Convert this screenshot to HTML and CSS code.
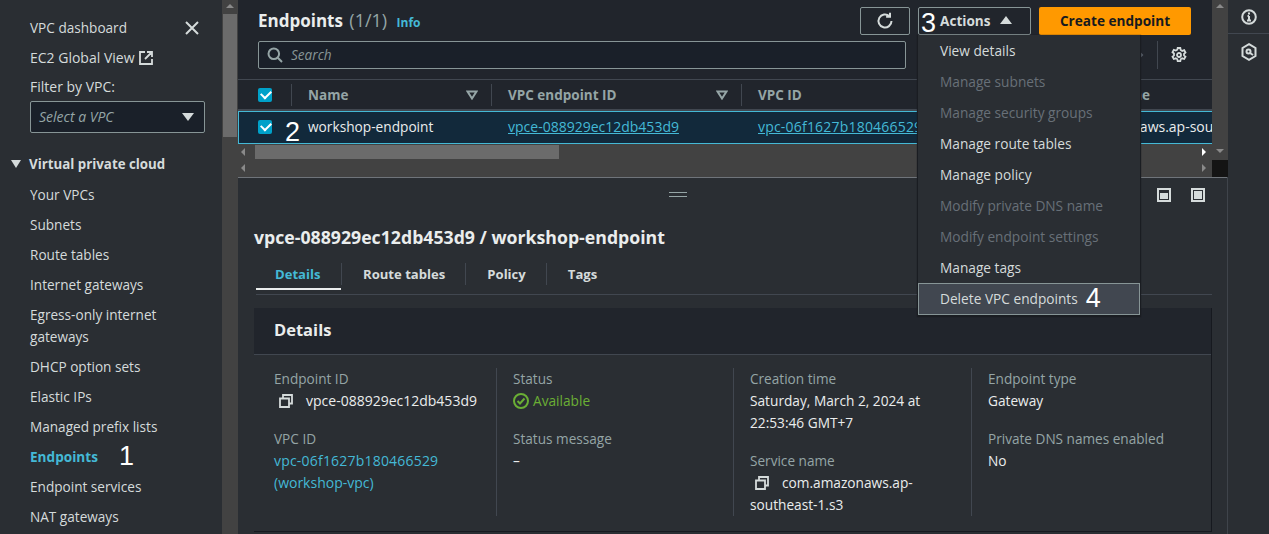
FILE: index.html
```html
<!DOCTYPE html>
<html lang="en">
<head>
    <meta charset="UTF-8">
    <meta name="viewport" content="width=device-width, initial-scale=1.0">
    <title>Endpoints | VPC Console</title>
    <link rel="stylesheet" href="styles.css">
</head>
<body>
    <aside class="nav">
        <div class="nav-top">
            <a class="nav-link">VPC dashboard</a>
            <svg class="nav-close" width="16" height="16" viewBox="0 0 16 16"><path d="M2 2l12 12M14 2L2 14"/></svg>
        </div>
        <a class="nav-link nav-global">EC2 Global View
            <svg class="ext" width="14" height="14" viewBox="0 0 14 14"><path d="M6 1H1v12h12V8M8 1h5v5M13 1L6 8"/></svg>
        </a>
        <div class="nav-filter">Filter by VPC:</div>
        <div class="nav-select">
            <span>Select a VPC</span>
            <i class="caret-down"></i>
        </div>
        <div class="nav-section"><i class="caret-down small"></i>Virtual private cloud</div>
        <ul class="nav-list">
            <li>Your VPCs</li>
            <li>Subnets</li>
            <li>Route tables</li>
            <li>Internet gateways</li>
            <li>Egress-only internet gateways</li>
            <li>DHCP option sets</li>
            <li>Elastic IPs</li>
            <li>Managed prefix lists</li>
            <li class="active"><b>Endpoints</b><span class="mark mark-nav">1</span></li>
            <li>Endpoint services</li>
            <li>NAT gateways</li>
        </ul>
    </aside>

    <div class="scrollbar nav-scroll">
        <i class="arrow-up"></i>
        <div class="scroll-thumb"></div>
    </div>

    <main class="content">
        <section class="top">
            <div class="table-panel">
                <div class="toolbar">
                    <h1>Endpoints <span class="count">(1/1)</span> <a class="info">Info</a></h1>
                    <div class="buttons">
                        <button class="btn btn-icon">
                            <svg width="18" height="18" viewBox="0 0 18 18"><path d="M15.500 9a6.500 6.500 0 1 1-2.100-4.800M14 0.800v3.900h-3.900"/></svg>
                        </button>
                        <button class="btn btn-actions"><span class="mark mark-btn">3</span>Actions<i class="caret-up"></i></button>
                        <button class="btn btn-primary">Create endpoint</button>
                    </div>
                </div>
                <div class="search-row">
                    <div class="search">
                        <svg width="16" height="16" viewBox="0 0 16 16"><circle cx="6.800" cy="6.800" r="5.300"/><path d="M10.800 10.800l4.200 4.200"/></svg>
                        <span>Search</span>
                    </div>
                    <div class="pager">
                        <svg class="pager-next" width="8" height="12" viewBox="0 0 8 12"><path d="M1 1l5 5-5 5"/></svg>
                        <div class="gear-wrap">
                            <svg class="gear" width="16" height="16" viewBox="0 0 16 16"><circle cx="8" cy="8" r="2"/><path d="M6.700 1h2.600l.4 2 1.500.9 2-.7 1.300 2.300-1.500 1.300v1.600l1.500 1.300-1.300 2.300-2-.7-1.500.9-.4 2H6.700l-.4-2-1.500-.9-2 .7-1.300-2.300 1.500-1.300V6.500L1.500 5.200l1.300-2.300 2 .7 1.500-.9z"/></svg>
                        </div>
                    </div>
                </div>
                <div class="table">
                    <div class="row head">
                        <div class="cell cell-check"><i class="check"></i></div>
                        <div class="cell cell-name">Name<svg class="filter" width="12" height="10" viewBox="0 0 12 10"><path d="M1.500 1.500h9L6 8.500z"/></svg></div>
                        <div class="cell cell-id">VPC endpoint ID<svg class="filter" width="12" height="10" viewBox="0 0 12 10"><path d="M1.500 1.500h9L6 8.500z"/></svg></div>
                        <div class="cell cell-vpc">VPC ID</div>
                        <div class="cell cell-service">Service name</div>
                    </div>
                    <div class="row selected">
                        <div class="cell cell-check"><i class="check"></i><span class="mark mark-row">2</span></div>
                        <div class="cell cell-name">workshop-endpoint</div>
                        <div class="cell cell-id"><a>vpce-088929ec12db453d9</a></div>
                        <div class="cell cell-vpc"><a class="vpc-id">vpc-06f1627b180466529</a></div>
                        <div class="cell cell-service">com.amazonaws.ap-southeast-1.s3</div>
                    </div>
                </div>
                <div class="hscroll">
                    <i class="arrow-left"></i>
                    <div class="hscroll-thumb"></div>
                    <i class="arrow-right bright"></i>
                </div>
                <div class="hscroll">
                    <i class="arrow-left"></i>
                    <i class="arrow-right"></i>
                </div>
            </div>
            <div class="scrollbar main-scroll">
                <i class="arrow-up"></i>
                <i class="arrow-down"></i>
                <div class="corner"></div>
            </div>
        </section>

        <section class="split">
            <div class="split-bar">
                <div class="handle"></div>
                <div class="split-icons">
                    <svg width="14" height="14" viewBox="0 0 14 14"><path d="M1 1h12v12H1z" class="frame"/><path d="M3 5h8v6H3z" class="fill"/></svg>
                    <svg width="14" height="14" viewBox="0 0 14 14"><path d="M1 1h12v12H1z" class="frame"/><path d="M3 3h8v8H3z" class="fill"/></svg>
                </div>
            </div>
            <h2>vpce-088929ec12db453d9 / workshop-endpoint</h2>
            <div class="tabs">
                <div class="tab current">Details</div>
                <div class="tab">Route tables</div>
                <div class="tab">Policy</div>
                <div class="tab">Tags</div>
            </div>
            <div class="card">
                <div class="card-head">Details</div>
                <div class="card-body">
                    <div class="col">
                        <dl>
                            <dt>Endpoint ID</dt>
                            <dd class="id-text"><svg class="copy" width="14" height="14" viewBox="0 0 14 14"><path d="M4 4V1h9v8.500h-3M1 4.500h9V13H1z"/></svg>vpce-088929ec12db453d9</dd>
                        </dl>
                        <dl>
                            <dt>VPC ID</dt>
                            <dd class="id-text"><a><span class="vpc-id">vpc-06f1627b180466529</span> (workshop-vpc)</a></dd>
                        </dl>
                    </div>
                    <div class="col">
                        <dl>
                            <dt>Status</dt>
                            <dd class="ok"><svg width="16" height="16" viewBox="0 0 16 16"><circle cx="8" cy="8" r="7"/><path d="M4.500 8l2.500 2.500 4.500-5"/></svg>Available</dd>
                        </dl>
                        <dl>
                            <dt>Status message</dt>
                            <dd>–</dd>
                        </dl>
                    </div>
                    <div class="col">
                        <dl>
                            <dt>Creation time</dt>
                            <dd>Saturday, March 2, 2024 at 22:53:46 GMT+7</dd>
                        </dl>
                        <dl>
                            <dt>Service name</dt>
                            <dd><svg class="copy" width="14" height="14" viewBox="0 0 14 14"><path d="M4 4V1h9v8.500h-3M1 4.500h9V13H1z"/></svg>com.amazonaws.ap-southeast-1.s3</dd>
                        </dl>
                    </div>
                    <div class="col">
                        <dl>
                            <dt>Endpoint type</dt>
                            <dd>Gateway</dd>
                        </dl>
                        <dl>
                            <dt>Private DNS names enabled</dt>
                            <dd>No</dd>
                        </dl>
                    </div>
                </div>
            </div>
        </section>

        <ul class="menu">
            <li>View details</li>
            <li class="off">Manage subnets</li>
            <li class="off">Manage security groups</li>
            <li>Manage route tables</li>
            <li>Manage policy</li>
            <li class="off">Modify private DNS name</li>
            <li class="off">Modify endpoint settings</li>
            <li>Manage tags</li>
            <li class="hover">Delete VPC endpoints<span class="mark mark-menu">4</span></li>
        </ul>
    </main>

    <aside class="rail">
        <div class="rail-item">
            <svg width="16" height="16" viewBox="0 0 16 16"><circle cx="8" cy="8" r="6.800"/><path d="M8 7v4.500M6 11.500h4M6.500 7H8"/><path d="M8 3.600v1.800"/></svg>
        </div>
        <div class="rail-item">
            <svg width="16" height="18" viewBox="0 0 16 18"><path d="M8 1.200l6.500 3.800v8L8 16.800 1.500 13V5z"/><circle cx="7.500" cy="8.500" r="2"/><path d="M9 10l3 2"/></svg>
        </div>
    </aside>
</body>
</html>
```

FILE: styles.css
```css
* {
    box-sizing: border-box;
}
html, body {
    height: 534px;
    overflow: hidden;
}
body {
    margin: 0;
    display: flex;
    font-family: "Open Sans", "Noto Sans", sans-serif;
    font-size: 14px;
    line-height: 22px;
    color: #d5dbdb;
    background-color: #2a2e33;
}
svg {
    fill: none;
    stroke: currentColor;
    stroke-width: 2;
}
a {
    color: #44b9d6;
}
ul {
    list-style: none;
    margin: 0;
    padding: 0;
}

/* annotation numbers typed on top of the screenshot */
.mark {
    font-family: "Liberation Sans", sans-serif;
    font-size: 27px;
    font-weight: 400;
    line-height: 0;
    color: #ffffff;
}
.mark-nav {
    margin-left: 21px;
    position: relative;
    top: 3px;
}
.mark-row {
    margin-left: 13px;
    position: relative;
    top: 5px;
}
.mark-btn {
    margin-right: 4px;
    position: relative;
    top: 3px;
}
.mark-menu {
    margin-left: 8px;
    position: relative;
    top: 3px;
}

/* left navigation */
.nav {
    width: 222px;
    flex: none;
    padding: 17px 0 0 30px;
    background-color: #2a2e33;
}
.nav-top {
    display: flex;
    justify-content: space-between;
    align-items: center;
    padding-right: 22px;
    font-size: 13.600px;
}
.nav-close {
    stroke: #d5dbdb;
}
.nav-link {
    color: #d5dbdb;
}
.nav-global {
    display: flex;
    align-items: center;
    gap: 5px;
    margin-top: 8px;
}
.ext {
    stroke-width: 1.800;
}
.nav-filter {
    margin-top: 7px;
}
.nav-select {
    width: 175px;
    height: 32px;
    margin-top: 3px;
    padding: 0 10px 0 8px;
    display: flex;
    justify-content: space-between;
    align-items: center;
    background-color: #1a2029;
    border: 1px solid #879596;
    border-radius: 2px;
    font-style: italic;
    color: #95a5a6;
}
.caret-down {
    width: 0;
    height: 0;
    border-left: 6px solid transparent;
    border-right: 6px solid transparent;
    border-top: 8px solid #d5dbdb;
}
.caret-down.small {
    border-left-width: 5px;
    border-right-width: 5px;
    border-top-width: 8px;
    margin-right: 8px;
}
.nav-section {
    display: flex;
    align-items: center;
    margin: 20px 0 0 -19px;
    font-size: 13.300px;
    font-weight: 700;
}
.nav-list {
    margin-top: 9px;
    width: 165px;
    font-size: 13.600px;
}
.nav-list li {
    margin-bottom: 8px;
}
.nav-list .active b {
    color: #44b9d6;
}

/* scrollbars */
.scrollbar {
    width: 16px;
    flex: none;
    background-color: #424242;
    position: relative;
}
.nav-scroll {
    height: 534px;
    padding: 14px 1px 0;
}
.scroll-thumb {
    height: 123px;
    background-color: #6b6b6b;
}
.arrow-up, .arrow-down {
    position: absolute;
    left: 4px;
    width: 0;
    height: 0;
    border-left: 4px solid transparent;
    border-right: 4px solid transparent;
}
.arrow-up {
    top: 4px;
    border-bottom: 4px solid #8a8a8a;
}
.arrow-down {
    top: 149px;
    border-top: 4px solid #8a8a8a;
}
.main-scroll {
    height: 177px;
}
.corner {
    position: absolute;
    left: 0;
    top: 160px;
    width: 16px;
    height: 17px;
    background-color: #141414;
}

/* main area */
.content {
    width: 990px;
    flex: none;
    position: relative;
    border-right: 1px solid #3f444b;
}
.top {
    display: flex;
    height: 178px;
    border-bottom: 1px solid #6f747a;
    background-color: #21252c;
}
.table-panel {
    width: 974px;
    flex: none;
    overflow: hidden;
}
.toolbar {
    display: flex;
    justify-content: space-between;
    height: 41px;
    padding: 7px 21px 0 20px;
}
h1 {
    margin: 0;
    font-size: 17px;
    line-height: 26px;
    font-weight: 700;
    color: #eaeded;
}
.count {
    margin-left: 2px;
    font-size: 18px;
    font-weight: 400;
    color: #95a5a6;
}
.info {
    margin-left: 5px;
    font-size: 12px;
    font-weight: 700;
    color: #44b9d6;
}
.buttons {
    display: flex;
    gap: 8px;
}
.btn {
    height: 28px;
    padding: 0 0 2px;
    font-family: inherit;
    font-size: 13.600px;
    font-weight: 700;
    border-radius: 2px;
    display: flex;
    align-items: center;
    justify-content: center;
}
.btn-icon {
    width: 50px;
    padding: 0;
    background: none;
    border: 1px solid #879596;
    color: #d5dbdb;
}
.btn-actions {
    width: 113px;
    justify-content: flex-start;
    padding-left: 2px;
    background: none;
    border: 1px solid #879596;
    color: #d5dbdb;
}
.caret-up {
    margin-left: 9px;
    width: 0;
    height: 0;
    border-left: 6px solid transparent;
    border-right: 6px solid transparent;
    border-bottom: 8px solid #d5dbdb;
}
.btn-primary {
    width: 152px;
    background-color: #ff9900;
    border: none;
    color: #16191f;
}
.search-row {
    display: flex;
    height: 39px;
    padding-left: 20px;
    border-bottom: 1px solid #414750;
}
.search {
    width: 648px;
    height: 28px;
    padding-left: 8px;
    display: flex;
    align-items: center;
    gap: 8px;
    background-color: #1a2029;
    border: 1px solid #879596;
    border-radius: 2px;
    font-size: 13.600px;
    font-style: italic;
    color: #879596;
}
.search svg {
    color: #95a5a6;
}
.pager {
    flex: 1;
    height: 28px;
    display: flex;
    align-items: center;
}
.pager-next {
    margin-left: 230px;
    color: #545b64;
}
.gear-wrap {
    height: 28px;
    margin-left: 13px;
    padding-left: 13px;
    display: flex;
    align-items: center;
    border-left: 1px solid #414750;
}
.gear {
    color: #d5dbdb;
    stroke-width: 1.800;
}
.table {
    width: 974px;
}
.row {
    display: flex;
    align-items: center;
    white-space: nowrap;
}
.head {
    height: 31px;
    padding-top: 1px;
    font-size: 13.500px;
    font-weight: 700;
    color: #95a5a6;
    border-bottom: 2px solid #414750;
}
.selected {
    height: 33px;
    padding-bottom: 1px;
    color: #eaeded;
    background-color: #12293b;
    border-top: 1px solid #44b9d6;
    border-bottom: 1px solid #44b9d6;
    box-shadow: inset 1px 0 0 #44b9d6;
}
.selected a {
    text-decoration: underline;
}
.cell {
    flex: none;
    display: flex;
    align-items: center;
    padding-left: 16px;
    height: 22px;
}
.cell-check {
    width: 53px;
    padding-left: 20px;
}
.cell-name {
    width: 200px;
    justify-content: space-between;
    padding-right: 13px;
    border-left: 1px solid #414750;
}
.cell-id {
    width: 250px;
    justify-content: space-between;
    padding-right: 13px;
    border-left: 1px solid #414750;
}
.cell-vpc {
    width: 299px;
    border-left: 1px solid #414750;
}
.head .cell-service {
    padding-left: 20px;
}
.selected .cell {
    border-left-color: transparent;
}
.selected .cell-name {
    font-size: 13.700px;
}
.vpc-id {
    letter-spacing: .2px;
}
.check {
    width: 14px;
    height: 14px;
    flex: none;
    border-radius: 2px;
    background-color: #00a1c9;
    position: relative;
}
.check::after {
    content: "";
    position: absolute;
    left: 3px;
    top: 2px;
    width: 8px;
    height: 5px;
    border-left: 2px solid #ffffff;
    border-bottom: 2px solid #ffffff;
    transform: rotate(-45deg);
}
.filter {
    color: #95a5a6;
}
.hscroll {
    height: 16px;
    background-color: #424242;
    position: relative;
    padding-left: 17px;
}
.hscroll + .hscroll {
    height: 17px;
}
.hscroll-thumb {
    width: 304px;
    height: 14px;
    position: relative;
    top: 1px;
    background-color: #6b6b6b;
}
.arrow-left, .arrow-right {
    position: absolute;
    top: 4px;
    width: 0;
    height: 0;
    border-top: 4px solid transparent;
    border-bottom: 4px solid transparent;
}
.arrow-left {
    left: 3px;
    border-right: 4px solid #8a8a8a;
}
.arrow-right {
    right: 6px;
    border-left: 4px solid #8a8a8a;
}
.arrow-right.bright {
    border-left-color: #ffffff;
}

/* split panel */
.split {
    padding: 0 0 0 16px;
    background-color: #2a2e33;
}
.split-bar {
    height: 37px;
    position: relative;
    display: flex;
    justify-content: flex-end;
    align-items: flex-start;
    padding: 10px 22px 0 0;
}
.handle {
    position: absolute;
    left: 415px;
    top: 14px;
    width: 18px;
    height: 5px;
    border-top: 1px solid #95a5a6;
    border-bottom: 1px solid #95a5a6;
}
.split-icons {
    display: flex;
    gap: 20px;
}
.split-icons .frame {
    stroke: #d5dbdb;
    stroke-width: 2;
}
.split-icons .fill {
    fill: #d5dbdb;
    stroke: none;
}
h2 {
    margin: 11px 0 0;
    font-size: 17.700px;
    line-height: 22px;
    font-weight: 700;
    color: #eaeded;
}
.tabs {
    display: flex;
    height: 36px;
    margin: 11px 15px 0 2px;
    padding-top: 4px;
    align-items: flex-start;
    border-bottom: 1px solid #414750;
    font-size: 13.100px;
    font-weight: 700;
    color: #d5dbdb;
}
.tab {
    height: 22px;
    padding: 0 20px 0 21px;
    border-right: 1px solid #414750;
}
.tab:last-child {
    border-right: none;
}
.tab.current {
    width: 86px;
    padding-left: 19px;
    color: #44b9d6;
    position: relative;
}
.tab.current::after {
    content: "";
    position: absolute;
    left: 0;
    right: 0;
    top: 25px;
    height: 2px;
    background-color: #eaeded;
}
.card {
    width: 958px;
    margin-top: 13px;
    height: 224px;
    border-bottom: 1px solid #16191f;
    border-right: 1px solid #16191f;
}
.card-head {
    height: 47px;
    padding: 9px 20px 0;
    background-color: #21252c;
    border-bottom: 1px solid #414750;
    font-size: 16.500px;
    line-height: 26px;
    font-weight: 700;
    color: #eaeded;
}
.card-body {
    display: grid;
    grid-template-columns: 223px 237px 238px 1fr;
    padding: 13px 0 0 20px;
}
.col {
    height: 148px;
    padding-left: 16px;
    border-right: 1px solid #414750;
}
.col:first-child {
    padding-left: 0;
}
.col:last-child {
    border-right: none;
}
dl {
    margin: 0 0 16px;
}
dt {
    font-size: 13.600px;
    color: #95a5a6;
}
dd {
    margin: 0;
    font-size: 13.700px;
    color: #eaeded;
}
.id-text {
    font-size: 14px;
}
.copy {
    margin: 0 13px -2px 5px;
    color: #d5dbdb;
    stroke-width: 1.800;
}
.ok {
    display: flex;
    align-items: center;
    gap: 4px;
    color: #6aaf35;
}

/* actions dropdown */
.menu {
    position: absolute;
    left: 680px;
    top: 35px;
    width: 222px;
    height: 280px;
    padding-top: 1px;
    background-color: #2a2e33;
    box-shadow: 0 1px 1px 1px #1a1d22;
    font-weight: 500;
    font-size: 13.700px;
    color: #d5dbdb;
}
.menu li {
    height: 31px;
    padding: 4px 22px;
    white-space: nowrap;
}
.menu .off {
    color: #687078;
}
.menu .hover {
    height: 32px;
    margin-top: -1px;
    background-color: #414750;
    border: 1px solid #879596;
    padding: 4px 21px;
}

/* right rail */
.rail {
    flex: 1;
    color: #d5dbdb;
}
.rail-item {
    height: 34px;
    display: flex;
    justify-content: center;
    align-items: center;
    border-bottom: 1px solid #414750;
}
.rail-item + .rail-item {
    height: 36px;
    border-bottom: none;
}
```
